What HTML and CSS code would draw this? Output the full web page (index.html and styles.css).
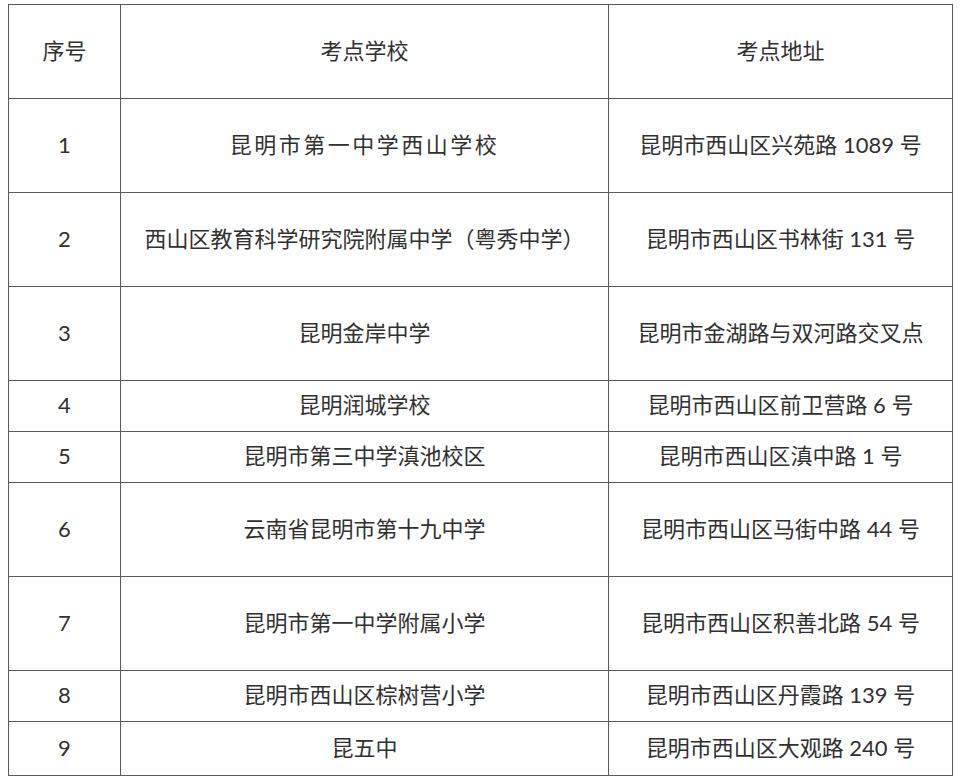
FILE: index.html
```html
<!DOCTYPE html>
<html lang="zh-CN">
<head>
<meta charset="utf-8">
<title>考点</title>
<link rel="stylesheet" href="styles.css">
</head>
<body>
<table class="sites">
  <colgroup>
    <col class="c-no">
    <col class="c-school">
    <col class="c-addr">
  </colgroup>
  <thead>
    <tr class="tall"><th>序号</th><th>考点学校</th><th>考点地址</th></tr>
  </thead>
  <tbody>
    <tr class="tall"><td>1</td><td class="wide">昆明市第一中学西山学校</td><td>昆明市西山区兴苑路 1089 号</td></tr>
    <tr class="tall"><td>2</td><td>西山区教育科学研究院附属中学（粤秀中学）</td><td>昆明市西山区书林街 131 号</td></tr>
    <tr class="tall"><td>3</td><td>昆明金岸中学</td><td>昆明市金湖路与双河路交叉点</td></tr>
    <tr class="short"><td>4</td><td>昆明润城学校</td><td>昆明市西山区前卫营路 6 号</td></tr>
    <tr class="short"><td>5</td><td>昆明市第三中学滇池校区</td><td>昆明市西山区滇中路 1 号</td></tr>
    <tr class="tall"><td>6</td><td>云南省昆明市第十九中学</td><td>昆明市西山区马街中路 44 号</td></tr>
    <tr class="tall"><td>7</td><td>昆明市第一中学附属小学</td><td>昆明市西山区积善北路 54 号</td></tr>
    <tr class="short"><td>8</td><td>昆明市西山区棕树营小学</td><td>昆明市西山区丹霞路 139 号</td></tr>
    <tr class="last"><td>9</td><td>昆五中</td><td>昆明市西山区大观路 240 号</td></tr>
  </tbody>
</table>
</body>
</html>
```
FILE: styles.css
```css
html, body {
  margin: 0;
  padding: 0;
  background: #ffffff;
}

body {
  padding: 4px 8px 0 8px;
}

.sites {
  border-collapse: collapse;
  table-layout: fixed;
  width: 944px;
  font-family: Lato, "Noto Sans CJK SC", sans-serif;
  font-size: 22px;
  color: #303030;
}

.c-no { width: 112px; }
.c-school { width: 488px; }
.c-addr { width: 344px; }

.sites th,
.sites td {
  border: 1px solid #5a5a5a;
  padding: 0 0 2px 0;
  text-align: center;
  vertical-align: middle;
  font-weight: 400;
  white-space: nowrap;
  line-height: 24px;
}

.sites td.wide {
  letter-spacing: 2.5px;
}

.tall { height: 94px; }
.short { height: 51px; }
.last { height: 54px; }
```
